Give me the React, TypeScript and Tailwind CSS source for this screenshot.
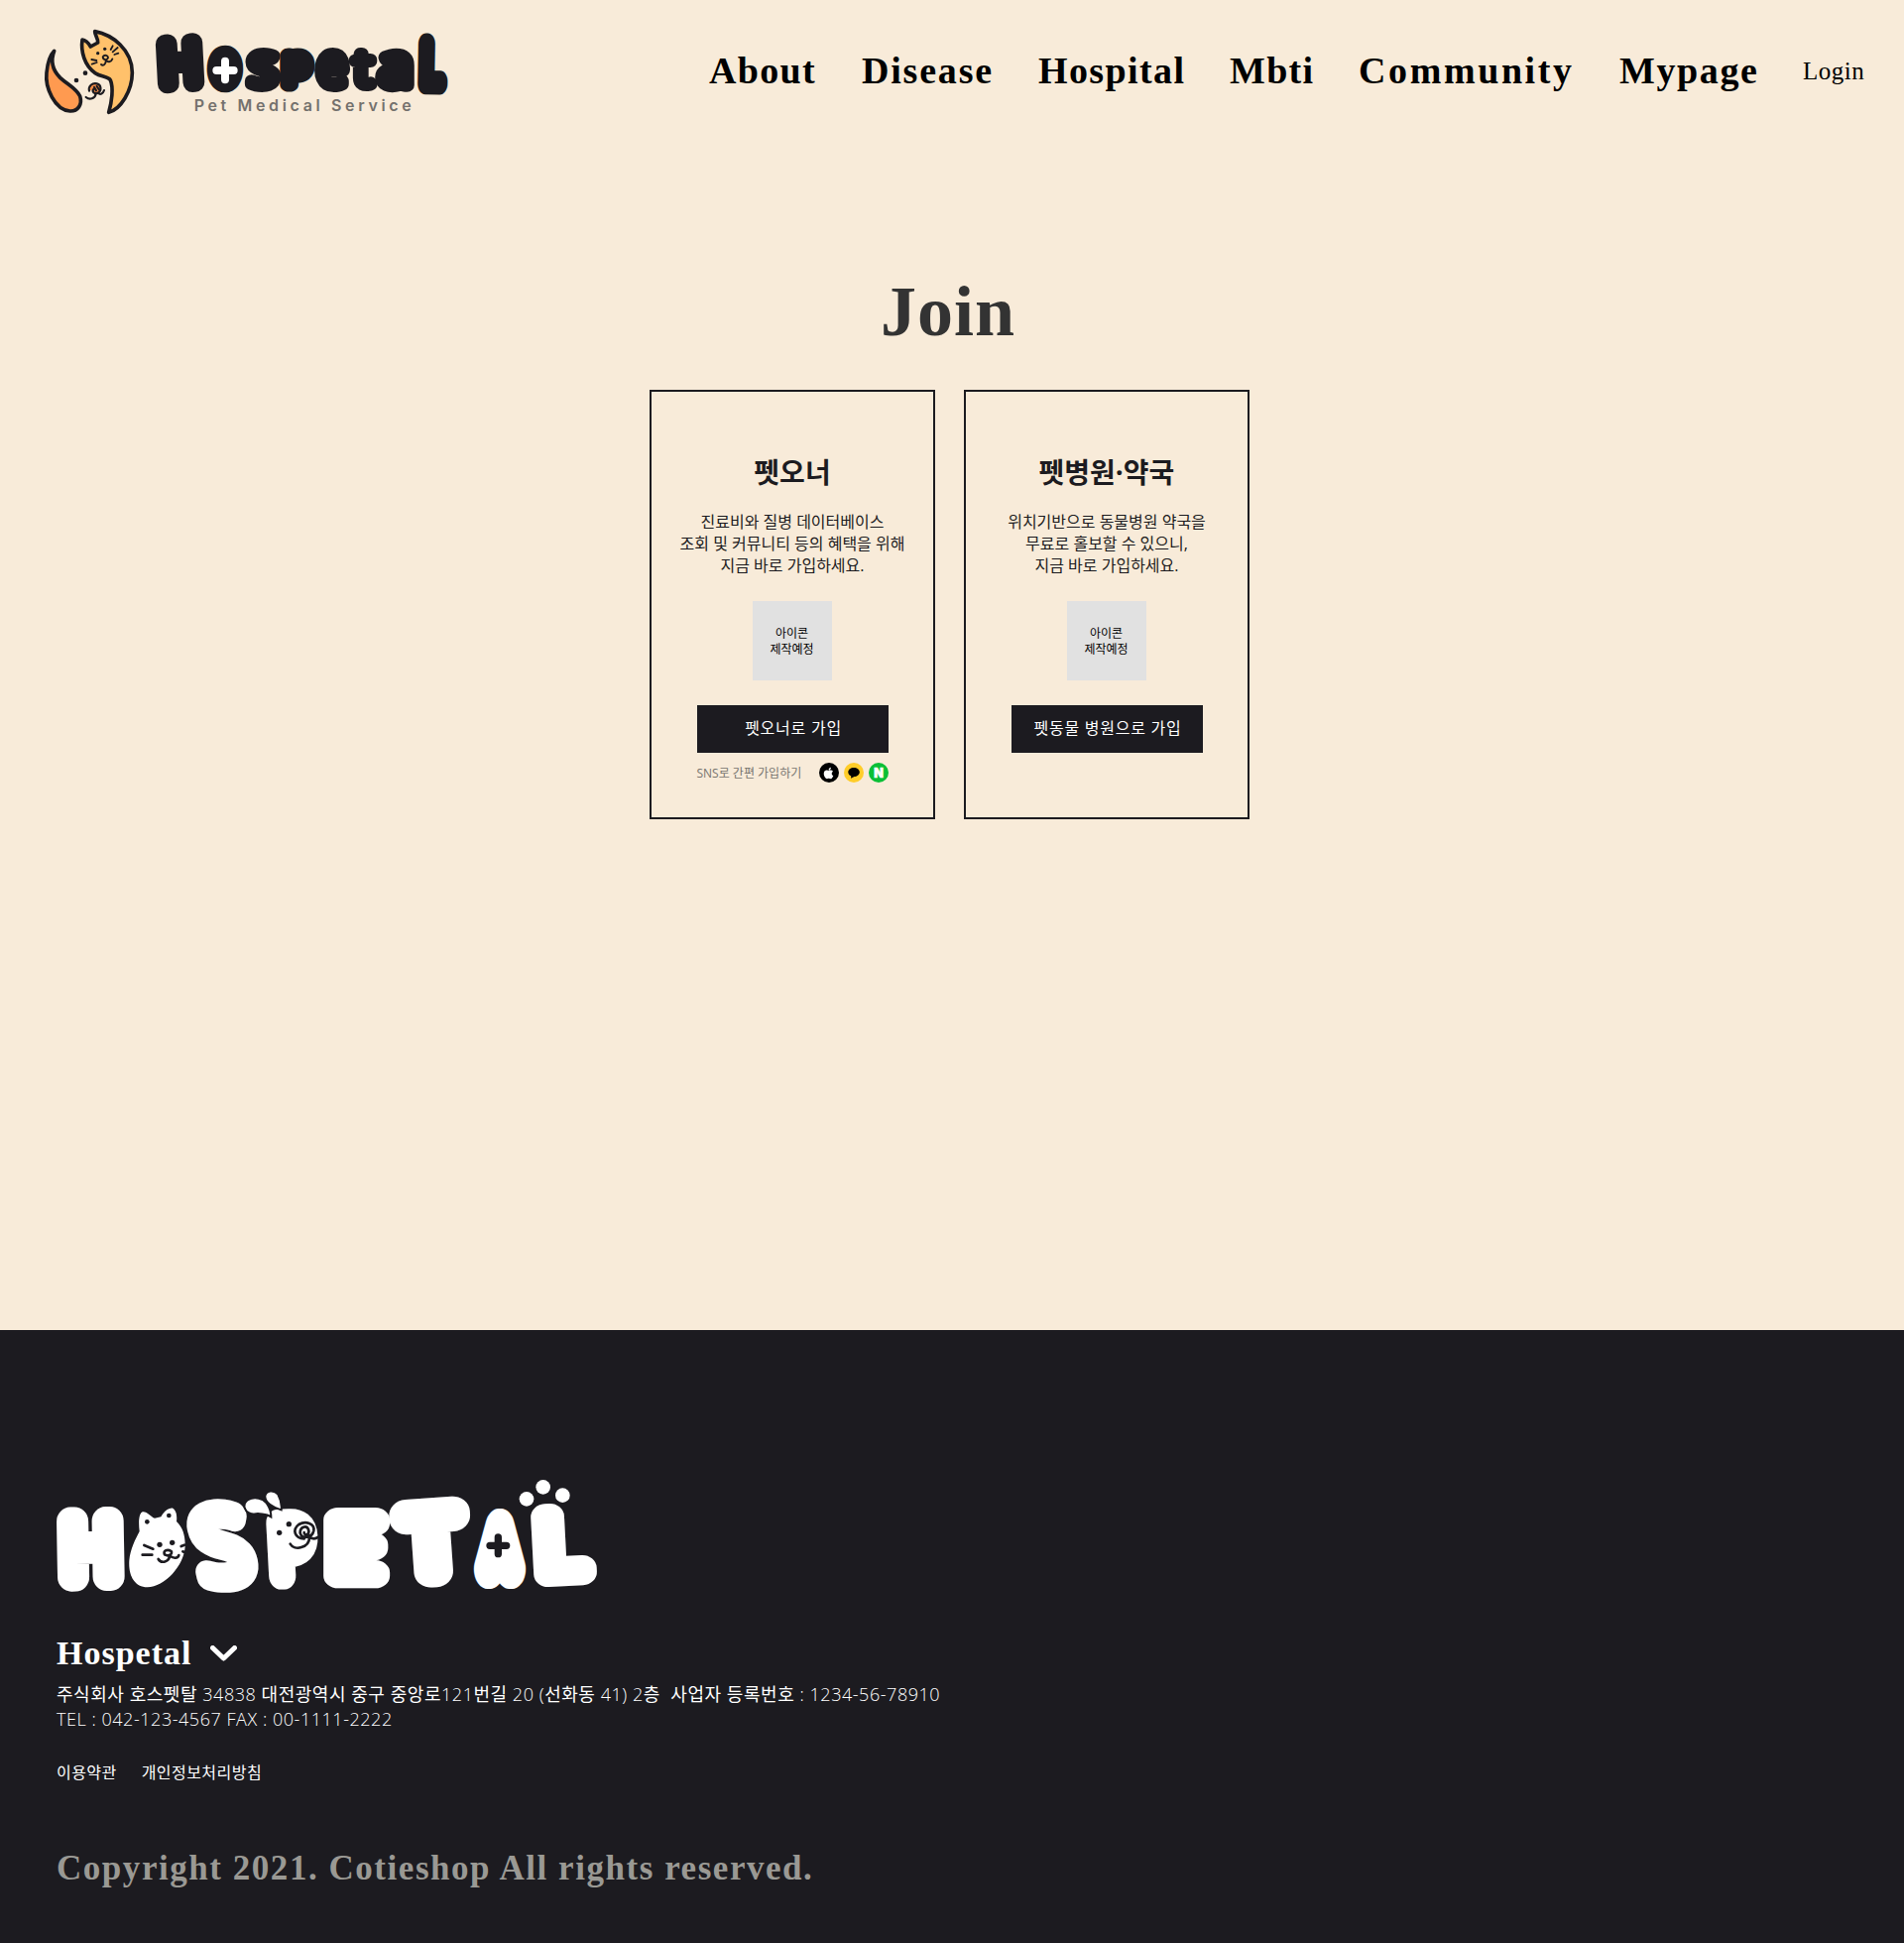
import React from 'react';
import { FaApple } from 'react-icons/fa';

/* Ink extents of each glyph at a font size of 100: left, right, bottom, top */
const ink: Record<string, [number, number, number, number]> = {
  H: [10, 63, 0, 71.4],
  o: [5.7, 53, -1, 54.5],
  s: [4, 41, -1, 54.5],
  p: [9, 54.5, -24, 54.5],
  e: [5.7, 49.5, -1, 54.5],
  t: [2.5, 32, -1, 66],
  a: [5, 45.5, -1, 54.5],
  L: [10, 47, 0, 71.4],
  S: [4.5, 48.5, -1, 72.4],
  P: [10, 53, 0, 71.4],
  E: [10, 48.5, 0, 71.4],
  T: [1, 52, 0, 71.4],
  A: [0, 60, 0, 71.4],
};

type LetterProps = { ch: string; x1: number; x2: number; y1: number; y2: number; s: number; rot?: number; skew?: number };

/* A rounded, inflated letter that fills the box x1..x2 / y1..y2 */
function Letter({ ch, x1, x2, y1, y2, s, rot = 0, skew = 0 }: LetterProps) {
  const [l, r, b, t] = ink[ch];
  const cx = (x1 + x2) / 2;
  const cy = (y1 + y2) / 2;
  const sx = (x2 - x1 - s) / (r - l);
  const sy = (y2 - y1 - s) / (t - b);
  const tx = x1 + s / 2 - l * sx - cx;
  const ty = y2 - s / 2 + b * sy - cy;
  return (
    <text
      transform={`translate(${cx} ${cy}) rotate(${rot}) skewX(${skew}) translate(${tx} ${ty}) scale(${sx} ${sy})`}
      fontFamily="Open Sans"
      fontWeight={300}
      fontSize={100}
      stroke="currentColor"
      fill="currentColor"
      strokeWidth={s / 3}
      vectorEffect="non-scaling-stroke"
      strokeLinejoin="round"
      strokeLinecap="round"
    >
      {ch}
    </text>
  );
}

function HeaderLogo() {
  return (
    <svg viewBox="0 0 1320 345" className="h-[115px] w-[440px] shrink-0 text-[#1c1b20]" aria-label="Hospetal">
      <g stroke="#1c1b20" strokeWidth="11" strokeLinejoin="round" strokeLinecap="round" fill="none">
        <path fill="#ffc16b" d="M197 50C250 60 310 105 310 175C310 230 275 285 239 295C248 265 254 220 244 197C236 185 215 188 198 176C165 153 154 110 159 75C170 76 178 86 184 96L206 84C207 70 197 62 197 50Z" />
        <path fill="#ff9a50" stroke="none" d="M62 140C75 195 125 215 150 245C162 270 145 292 122 291C70 285 38 215 62 140Z" />
        <path d="M74 109C62 140 67 165 92 190C117 213 140 222 152 246C160 272 145 292 122 291C75 287 46 220 51 175C54 145 63 120 74 109Z" />
        <g strokeWidth="5.5">
          <path d="M221 127C226 119 237 122 237 130C235 138 222 137 221 127M230 137C236 144 246 144 250 133M230 137C231 151 221 155 216 150M245 105L251 94M251 112L266 99M256 120L268 116M187 135L202 138M188 149L203 144" />
        </g>
        <g strokeWidth="6.5">
          <path fill="#f58b46" d="M180 230C176 215 190 205 203 208C217 212 218 228 207 236C196 241 187 232 193 225" />
          <path d="M195 219L201 229M203 216L209 225M207 236C213 243 222 238 225 228M170 249C181 258 198 254 200 238" />
        </g>
      </g>
      <g fill="#1c1b20"><circle cx="206" cy="116" r="5" /><circle cx="227" cy="103" r="5" /><circle cx="141" cy="198" r="7" /><circle cx="168" cy="176" r="7" /></g>
      <Letter ch="H" x1={383} x2={528} y1={57} y2={235} s={58} rot={-3} />
      <Letter ch="o" x1={533} x2={649} y1={95} y2={234} s={62} />
      <Letter ch="s" x1={650} x2={758} y1={97} y2={234} s={40} />
      <Letter ch="p" x1={758} x2={862} y1={98} y2={233} s={48} />
      <Letter ch="e" x1={860} x2={970} y1={97} y2={234} s={38} />
      <Letter ch="t" x1={968} x2={1052} y1={101} y2={234} s={38} />
      <Letter ch="a" x1={1046} x2={1164} y1={98} y2={236} s={42} />
      <Letter ch="L" x1={1169} x2={1268} y1={60} y2={236} s={56} rot={1} />
      <path d="M591 140V196M565 168H617" stroke="#fff" strokeWidth="24" strokeLinecap="round" />
      <text x="497" y="291" textLength="657" fontFamily="Inter" fontWeight={600} fontSize="48" fill="#74716d">Pet Medical Service</text>
    </svg>
  );
}

function FooterLogo() {
  return (
    <svg viewBox="0 0 1740 480" className="h-[160px] w-[580px] shrink-0 text-white" aria-label="Hospetal">
      <Letter ch="H" x1={52} x2={259} y1={148} y2={402} s={86} rot={-1} />
      <path fill="#fff" d="M302 222C298 190 301 162 314 163C328 164 337 180 348 182L367 178C374 164 390 149 403 152C414 158 416 178 414 192C433 210 441 235 440 268C437 325 378 391 326 391C286 390 268 355 271 310C274 275 290 245 302 222Z" />
      <Letter ch="S" x1={452} x2={648} y1={124} y2={408} s={78} rot={-4} skew={8} />
      <Letter ch="P" x1={686} x2={846} y1={156} y2={393} s={78} rot={-3} />
      <path fill="#fff" stroke="#1c1b20" strokeWidth="6" d="M700 178C687 168 675 171 660 168C640 172 624 165 620 151C615 126 645 114 674 126C690 136 700 157 700 178ZM731 157C705 149 681 134 682 115C685 98 708 95 721 110C728 123 733 140 731 157Z" />
      <Letter ch="E" x1={862} x2={1054} y1={146} y2={397} s={82} />
      <Letter ch="T" x1={1067} x2={1306} y1={118} y2={394} s={100} rot={-4} />
      <Letter ch="A" x1={1304} x2={1480} y1={162} y2={388} s={104} />
      <Letter ch="L" x1={1492} x2={1674} y1={134} y2={390} s={84} rot={-3} />
      <g fill="#fff"><circle cx="1473" cy="124" r="22" /><circle cx="1523" cy="88" r="22" /><circle cx="1582" cy="113" r="22" /></g>
      <path d="M1387 240V290M1362 265H1412" stroke="#1c1b20" strokeWidth="22" strokeLinecap="round" />
      <g fill="#1c1b20"><circle cx="325" cy="193" r="7" /><circle cx="391" cy="174" r="7" /><circle cx="363" cy="262" r="8" /><circle cx="401" cy="256" r="8" /><circle cx="725" cy="226" r="8" /><circle cx="754" cy="200" r="8" /></g>
      <g fill="none" stroke="#1c1b20" strokeWidth="8" strokeLinecap="round" strokeLinejoin="round">
        <path d="M316 264L343 275M311 293H340M428 267L438 263M433 283L440 286M378 292C372 279 387 275 398 282C403 291 390 299 378 292M393 294C403 306 419 304 421 294M393 295C393 315 367 320 359 306" />
        <path d="M800 244C773 243 762 218 784 201C805 189 833 198 829 220C824 242 793 247 788 227C787 209 807 202 813 216C818 231 801 239 800 225M815 233C820 248 835 245 843 239M816 240C816 272 770 282 758 260" />
      </g>
    </svg>
  );
}

const nav = [
  { label: 'About', cls: 'w-[154px] tracking-[1.3px]' },
  { label: 'Disease', cls: 'w-[178px] tracking-[1.8px]' },
  { label: 'Hospital', cls: 'w-[193px] tracking-[1.4px]' },
  { label: 'Mbti', cls: 'w-[130px] tracking-[1.3px]' },
  { label: 'Community', cls: 'w-[263px] tracking-[2.6px]' },
  { label: 'Mypage', cls: 'w-[185px] tracking-[1.6px]' },
];

type CardProps = { title: string; lines: string[]; button: string; children?: React.ReactNode };

function JoinCard({ title, lines, button, children }: CardProps) {
  return (
    <section className="flex h-[433px] w-[288px] flex-col items-center border-2 border-[#1c1b20] pt-[60px] text-[#1c1b20]">
      <h2 className="text-[28px] leading-[42px] font-bold">{title}</h2>
      <div className="mt-[18px] text-center text-[16px] leading-[22px]">
        {lines.map((l) => <p key={l} className="whitespace-nowrap">{l}</p>)}
      </div>
      <div className="mt-[25px] flex size-20 shrink-0 flex-col justify-center bg-[#e1e1e1] pt-[2px] pr-[1px] text-center text-[12px] leading-[16px] text-black">
        <p>아이콘</p>
        <p>제작예정</p>
      </div>
      <button className="mt-[25px] h-[48px] w-[193px] shrink-0 bg-[#1c1b20] pb-[2px] pl-[2px] text-[16px] tracking-[0.75px] whitespace-nowrap text-white">{button}</button>
      {children}
    </section>
  );
}

/* Hangul is set in the regular weight, Latin and digits stay light */
function Mixed({ text }: { text: string }) {
  return (
    <p>
      {text.split(/([\uac00-\ud7a3]+)/).map((part, i) => (
        <span key={i} className={i % 2 ? 'font-normal' : 'font-light'}>{part}</span>
      ))}
    </p>
  );
}

export default function App() {
  return (
    <div className='flex h-[1959px] w-[1920px] flex-col overflow-hidden bg-[#f8ebd9] font-["Open_Sans","Noto_Sans_CJK_KR",sans-serif]'>
      <header className="flex h-[145px] shrink-0 items-start pt-[15px] pl-[30px]">
        <HeaderLogo />
        <nav className='ml-[245px] flex items-start pt-[32px] text-black font-["Liberation_Serif",serif]'>
          {nav.map((n) => (
            <a key={n.label} className={'shrink-0 text-[38px] leading-[48px] font-bold ' + n.cls}>{n.label}</a>
          ))}
          <a className="text-[25px] leading-[50px] tracking-[0.5px]">Login</a>
        </nav>
      </header>

      <main className="flex h-[1196px] shrink-0 flex-col items-center">
        <h1 className='mt-[129px] mr-[8px] text-[72px] leading-[80px] font-bold tracking-[1px] text-[#333] font-["Liberation_Serif",serif]'>Join</h1>
        <div className="mt-[39px] mr-[5px] flex gap-[29px]">
          <JoinCard title="펫오너" lines={['진료비와 질병 데이터베이스', '조회 및 커뮤니티 등의 혜택을 위해', '지금 바로 가입하세요.']} button="펫오너로 가입">
            <div className="mt-[10px] flex w-[193px] items-center justify-between">
              <span className="pt-[2px] text-[12px] leading-[18px] text-[#77746f]">SNS로 간편 가입하기</span>
              <div className="flex gap-[5px]">
                <span className="flex size-5 items-center justify-center rounded-full bg-black text-white"><FaApple size={13} /></span>
                <svg viewBox="0 0 20 20" className="size-5"><circle cx="10" cy="10" r="10" fill="#ffcd29" /><path d="M10 5C13.200 5 15.800 7 15.800 9.500S13.200 14 10.500 14L7 15.800L7.300 13.500C5.500 12.800 4.300 11.300 4.300 9.500C4.300 7 6.800 5 10 5Z" /></svg>
                <svg viewBox="0 0 20 20" className="size-5"><circle cx="10" cy="10" r="10" fill="#0abf36" /><text x="10" y="14.500" textAnchor="middle" fontFamily="Inter" fontWeight="900" fontSize="12.500" fill="#fff" stroke="#fff" strokeWidth=".6">N</text></svg>
              </div>
            </div>
          </JoinCard>
          <JoinCard title="펫병원·약국" lines={['위치기반으로 동물병원 약국을', '무료로 홀보할 수 있으니,', '지금 바로 가입하세요.']} button="펫동물 병원으로 가입" />
        </div>
      </main>

      <footer className="flex grow flex-col bg-[#1c1b20] pt-[129px] text-white">
        <div className="pl-[40px]"><FooterLogo /></div>
        <div className="flex flex-col pl-[57px]">
          <div className="mt-[17px] flex h-[40px] items-center gap-[19px]">
            <strong className='text-[34px] leading-[40px] font-bold tracking-[1px] font-["Liberation_Serif",serif]'>Hospetal</strong>
            <svg viewBox="0 0 27 16" className="h-[16px] w-[27px]" fill="none" stroke="#fff" strokeWidth="5" strokeLinecap="round" strokeLinejoin="round"><path d="M2.500 2.500L13.500 13L24.500 2.500" /></svg>
          </div>
          <div className="mt-[9px] text-[18px] leading-[25px] tracking-[0.54px] whitespace-pre">
            <Mixed text="주식회사 호스펫탈 34838 대전광역시 중구 중앙로121번길 20 (선화동 41) 2층  사업자 등록번호 : 1234-56-78910" />
            <Mixed text="TEL : 042-123-4567 FAX : 00-1111-2222" />
          </div>
          <div className="mt-[29px] flex gap-[25px] text-[16px] leading-[24px] tracking-[0.45px]">
            <a>이용약관</a>
            <a>개인정보처리방침</a>
          </div>
          <p className='mt-[65px] text-[35px] leading-[40px] font-bold tracking-[1.54px] whitespace-nowrap text-[#9a9994] font-["Liberation_Serif",serif]'>Copyright 2021. Cotieshop All rights reserved.</p>
        </div>
      </footer>
    </div>
  );
}
